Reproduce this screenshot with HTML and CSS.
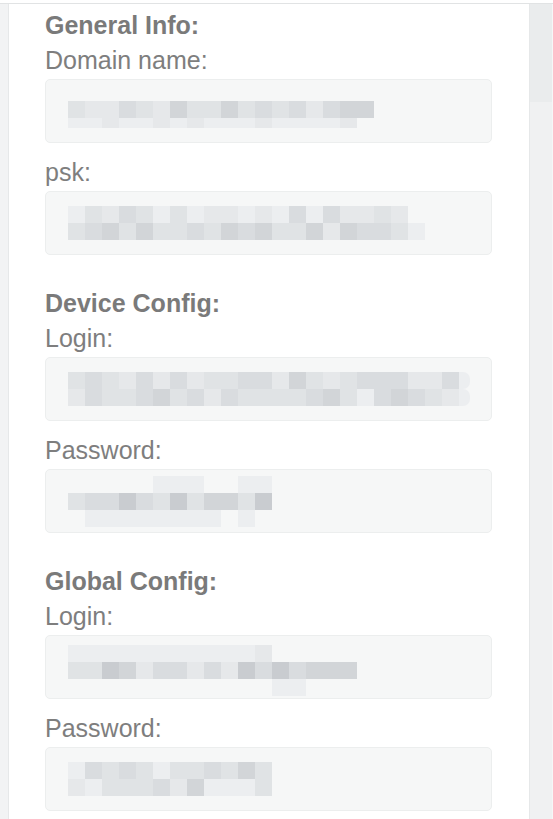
FILE: index.html
```html
<!DOCTYPE html>
<html lang="en">
<head>
<meta charset="utf-8">
<title>Config</title>
<link rel="stylesheet" href="styles.css">
</head>
<body>
<div class="topline"></div>
<div class="layout">
  <div class="side-left"></div>
  <main class="panel">
    <section class="group">
      <h2 class="heading">General Info:</h2>
      <div class="field">
        <div class="label">Domain name:</div>
        <div class="box">
          <div class="mosaic low">
            <div class="mrow"><i class="c"></i><i class="b"></i><i class="b"></i><i class="d"></i><i class="c"></i><i class="b"></i><i class="e"></i><i class="c"></i><i class="c"></i><i class="e"></i><i class="c"></i><i class="d"></i><i class="c"></i><i class="d"></i><i class="b"></i><i class="d"></i><i class="e"></i><i class="e"></i></div>
            <div class="mrow short"><i class="a"></i><i class="a"></i><i class="b"></i><i class="a"></i><i class="a"></i><i class="b"></i><i class="a"></i><i class="b"></i><i class="a"></i><i class="a"></i><i class="a"></i><i class="b"></i><i class="a"></i><i class="a"></i><i class="a"></i><i class="a"></i><i class="b"></i></div>
          </div>
        </div>
      </div>
      <div class="field">
        <div class="label">psk:</div>
        <div class="box">
          <div class="mosaic">
            <div class="mrow"><i class="a"></i><i class="c"></i><i class="b"></i><i class="d"></i><i class="c"></i><i class="a"></i><i class="c"></i><i class="a"></i><i class="b"></i><i class="b"></i><i class="a"></i><i class="b"></i><i class="a"></i><i class="d"></i><i class="a"></i><i class="d"></i><i class="b"></i><i class="b"></i><i class="c"></i><i class="b"></i></div>
            <div class="mrow"><i class="c"></i><i class="d"></i><i class="e"></i><i class="c"></i><i class="e"></i><i class="c"></i><i class="c"></i><i class="d"></i><i class="c"></i><i class="e"></i><i class="d"></i><i class="e"></i><i class="c"></i><i class="c"></i><i class="e"></i><i class="b"></i><i class="e"></i><i class="d"></i><i class="d"></i><i class="c"></i><i class="a"></i></div>
          </div>
        </div>
      </div>
    </section>

    <section class="group">
      <h2 class="heading">Device Config:</h2>
      <div class="field">
        <div class="label">Login:</div>
        <div class="box">
          <div class="mosaic">
            <div class="mrow"><i class="c"></i><i class="d"></i><i class="c"></i><i class="b"></i><i class="d"></i><i class="b"></i><i class="d"></i><i class="b"></i><i class="c"></i><i class="c"></i><i class="d"></i><i class="d"></i><i class="b"></i><i class="e"></i><i class="c"></i><i class="b"></i><i class="c"></i><i class="d"></i><i class="d"></i><i class="d"></i><i class="b"></i><i class="b"></i><i class="d"></i><i class="a half"></i></div>
            <div class="mrow"><i class="b"></i><i class="d"></i><i class="c"></i><i class="c"></i><i class="d"></i><i class="e"></i><i class="c"></i><i class="d"></i><i class="b"></i><i class="d"></i><i class="c"></i><i class="c"></i><i class="c"></i><i class="c"></i><i class="d"></i><i class="e"></i><i class="c"></i><i class="a"></i><i class="d"></i><i class="e"></i><i class="d"></i><i class="c"></i><i class="b"></i><i class="a half"></i></div>
          </div>
        </div>
      </div>
      <div class="field">
        <div class="label">Password:</div>
        <div class="box">
          <div class="mosaic">
            <div class="mrow"><i class="n"></i><i class="n"></i><i class="n"></i><i class="n"></i><i class="n"></i><i class="a"></i><i class="a"></i><i class="a"></i><i class="n"></i><i class="n"></i><i class="a"></i><i class="a"></i></div>
            <div class="mrow"><i class="c"></i><i class="d"></i><i class="d"></i><i class="f"></i><i class="d"></i><i class="c"></i><i class="f"></i><i class="c"></i><i class="e"></i><i class="e"></i><i class="c"></i><i class="f"></i></div>
            <div class="mrow"><i class="n"></i><i class="a"></i><i class="a"></i><i class="a"></i><i class="a"></i><i class="a"></i><i class="a"></i><i class="a"></i><i class="a"></i><i class="n"></i><i class="a"></i></div>
          </div>
        </div>
      </div>
    </section>

    <section class="group">
      <h2 class="heading">Global Config:</h2>
      <div class="field">
        <div class="label">Login:</div>
        <div class="box">
          <div class="mosaic low">
            <div class="mrow"><i class="a"></i><i class="a"></i><i class="a"></i><i class="a"></i><i class="a"></i><i class="a"></i><i class="a"></i><i class="a"></i><i class="a"></i><i class="a"></i><i class="a"></i><i class="b"></i></div>
            <div class="mrow"><i class="c"></i><i class="c"></i><i class="f"></i><i class="e"></i><i class="b"></i><i class="d"></i><i class="d"></i><i class="b"></i><i class="d"></i><i class="b"></i><i class="f"></i><i class="d"></i><i class="f"></i><i class="d"></i><i class="e"></i><i class="e"></i><i class="e"></i></div>
            <div class="mrow"><i class="n"></i><i class="n"></i><i class="n"></i><i class="n"></i><i class="n"></i><i class="n"></i><i class="n"></i><i class="n"></i><i class="n"></i><i class="n"></i><i class="n"></i><i class="n"></i><i class="a"></i><i class="a"></i></div>
          </div>
        </div>
      </div>
      <div class="field">
        <div class="label">Password:</div>
        <div class="box">
          <div class="mosaic">
            <div class="mrow"><i class="a"></i><i class="d"></i><i class="c"></i><i class="d"></i><i class="c"></i><i class="a"></i><i class="c"></i><i class="c"></i><i class="d"></i><i class="c"></i><i class="e"></i><i class="c"></i></div>
            <div class="mrow"><i class="b"></i><i class="a"></i><i class="c"></i><i class="c"></i><i class="c"></i><i class="d"></i><i class="b"></i><i class="e"></i><i class="a"></i><i class="a"></i><i class="a"></i><i class="c"></i></div>
          </div>
        </div>
      </div>
    </section>
  </main>
  <div class="side-right">
    <div class="side-right-top"></div>
  </div>
</div>
</body>
</html>
```

FILE: styles.css
```css
* {
  box-sizing: border-box;
}

html, body {
  margin: 0;
  padding: 0;
  background: #ffffff;
}

body {
  font-family: "Liberation Sans", Arial, Helvetica, sans-serif;
  padding-top: 3px;
}

.topline {
  height: 1px;
  background: #e1e3e4;
}

.layout {
  display: flex;
  min-height: 815px;
}

.side-left {
  width: 9px;
  flex: none;
  background: #f2f3f4;
  border-right: 1px solid #e6e8e9;
}

.side-right {
  width: 24px;
  flex: none;
  background: #f0f1f2;
  border-left: 1px solid #e6e8e9;
  border-right: 1px solid #f6f7f7;
}

.side-right-top {
  height: 98px;
  background: #eaeced;
}

.panel {
  flex: 1;
  background: #ffffff;
  padding: 4px 37px 0 36px;
  display: flex;
  flex-direction: column;
  gap: 31px;
}

.group {
  display: flex;
  flex-direction: column;
  gap: 12px;
}

.heading {
  margin: 0 0 -12px 0;
  font-size: 25px;
  font-weight: bold;
  line-height: 35px;
  color: #7a7a7a;
}

.field {
  display: flex;
  flex-direction: column;
  gap: 1px;
}

.label {
  font-size: 25px;
  line-height: 35px;
  color: #7e7e7e;
}

.box {
  height: 64px;
  background: #f6f7f7;
  border: 1px solid #eceeee;
  border-radius: 5px;
  padding-left: 22px;
  display: flex;
  align-items: center;
}

.mosaic {
  display: flex;
  flex-direction: column;
}

.mosaic.low {
  margin-top: 6px;
}

.mrow {
  display: flex;
  height: 17px;
}

.mrow.short {
  height: 10px;
}

.mrow i {
  display: block;
  width: 17px;
  height: 100%;
}

.mrow i.half {
  width: 11px;
  border-radius: 0 7px 7px 0;
}

.mrow i.n { background: transparent; }
.mrow i.a { background: #eceef0; }
.mrow i.b { background: #e6e8ea; }
.mrow i.c { background: #e0e3e5; }
.mrow i.d { background: #d9dcdf; }
.mrow i.e { background: #d2d5d8; }
.mrow i.f { background: #c9ccd0; }
```
